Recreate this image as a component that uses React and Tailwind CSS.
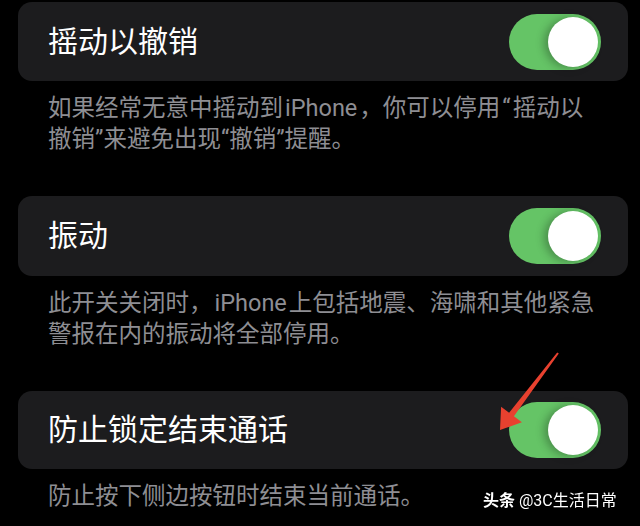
import React from "react";

function Toggle() {
  return (
    <div className="w-[92px] h-[56px] rounded-full bg-[#65c466] flex items-center justify-end pr-[3px] shrink-0">
      <div className="w-[50px] h-[50px] rounded-full bg-white shadow-[-4px_1px_8px_rgba(0,0,0,0.28)]" />
    </div>
  );
}

function Section({ title, desc, cardH, className = "" }) {
  return (
    <div className={className}>
      <div
        className={`${cardH} rounded-[14px] bg-[#1c1c1e] flex items-center justify-between pl-[30px] pr-[27px]`}
      >
        <span className="text-[30px] leading-none text-white">{title}</span>
        <Toggle />
      </div>
      <div className="mt-[12px] pl-[30px] text-[23.5px] leading-[31px] text-[#8e8e93] whitespace-nowrap">
        {desc}
      </div>
    </div>
  );
}

function IPhone() {
  return <span className="mx-[2px]">iPhone</span>;
}

export default function App() {
  return (
    <div className="w-[640px] h-[526px] bg-black relative overflow-hidden pl-[18px] pr-[12px] pt-[2px] font-['Roboto','Noto_Sans_CJK_SC',sans-serif]">
      <Section
        cardH="h-[79px]"
        title="摇动以撤销"
        desc={
          <>
            如果经常无意中摇动到<IPhone />，你可以停用<span className="mx-[2px]">“</span>摇动以
            <br />
            撤销”来避免出现“撤销”提醒。
          </>
        }
      />
      <Section
        cardH="h-[80px]"
        className="mt-[41px]"
        title="振动"
        desc={
          <>
            此开关关闭时，<IPhone />上包括地震、海啸和其他紧急
            <br />
            警报在内的振动将全部停用。
          </>
        }
      />
      <Section
        cardH="h-[78px]"
        className="mt-[41px]"
        title="防止锁定结束通话"
        desc={<>防止按下侧边按钮时结束当前通话。</>}
      />

      <svg
        className="absolute left-0 top-0 pointer-events-none"
        width="640"
        height="526"
        viewBox="0 0 640 526"
      >
        <polygon
          points="557.2,352.4 509.1,412.7 501.1,406.7 500,430 521.9,422.3 513.9,416.3 558.8,353.6"
          fill="#e8412f"
        />
      </svg>

      <div className="absolute left-[483px] top-[491px] text-[16px] leading-[20px] text-white whitespace-nowrap drop-shadow-[0_0_2px_rgba(0,0,0,0.6)]">
        <span className="font-bold">头条</span>
        <span> @3C生活日常</span>
      </div>
    </div>
  );
}
